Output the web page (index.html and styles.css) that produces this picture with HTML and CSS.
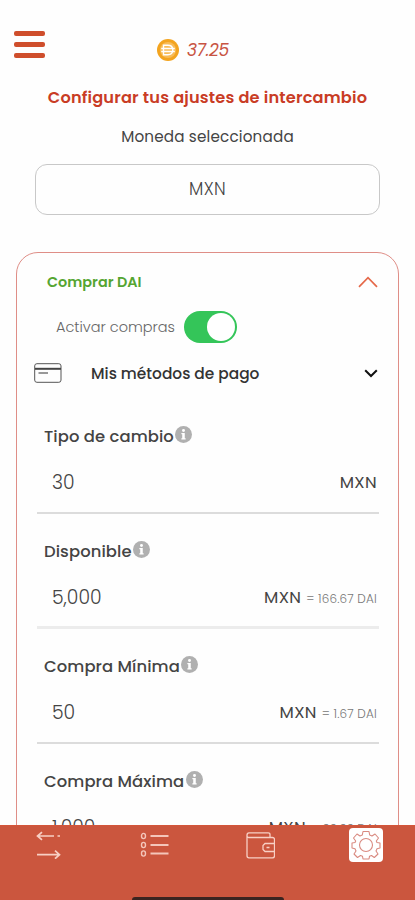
FILE: index.html
```html
<!DOCTYPE html>
<html lang="es">
<head>
<meta charset="utf-8">
<meta name="viewport" content="width=device-width, initial-scale=1">
<title>Ajustes de intercambio</title>
<link rel="stylesheet" href="styles.css">
</head>
<body>
<svg class="defs" width="0" height="0" aria-hidden="true">
  <symbol id="info" viewBox="0 0 16 16"><circle cx="8" cy="8" r="8" fill="#b0b0b0"/><circle cx="8" cy="4.2" r="1.4" fill="#fff"/><path d="M6 6.5h3.2v5H10v1.3H6v-1.3h.8V7.8H6z" fill="#fff"/></symbol>
</svg>
<main class="content">
  <header class="topbar">
    <button class="menu" aria-label="Menú"><i></i><i></i><i></i></button>
    <div class="balance">
      <svg width="22" height="22" viewBox="0 0 22 22" fill="none"><circle cx="11" cy="11" r="11" fill="#f3a41f"/><circle cx="11" cy="11" r="8" fill="#f8bc58"/><path d="M6.5 6.3h4.3c3 0 5 2 5 4.7s-2 4.7-5 4.7H6.5zM4.2 9.5h13.6M4.2 12.5h13.6" stroke="#fff" stroke-width="1.4"/></svg>
      <span>37.25</span>
    </div>
  </header>
  <h1>Configurar tus ajustes de intercambio</h1>
  <p class="caption">Moneda seleccionada</p>
  <div class="currency">MXN</div>
  <section class="panel">
    <div class="panel-head">
      <h2>Comprar DAI</h2>
      <svg width="20" height="12" viewBox="0 0 20 12" fill="none" stroke="#e5694a" stroke-width="1.7"><path d="M1 10.8 10 1.7l9 9.1"/></svg>
    </div>
    <div class="activate"><span>Activar compras</span><div class="switch"></div></div>
    <div class="methods">
      <svg width="28" height="20" viewBox="0 0 28 20" fill="none" stroke="#555"><rect x=".7" y=".7" width="26.3" height="18.6" rx="2.2"/><path d="M1 5.8h26" stroke="#444" stroke-width="2"/><path d="M4.5 10H14" stroke-width="1.2"/></svg>
      <span>Mis métodos de pago</span>
      <svg class="down" width="14" height="9" viewBox="0 0 14 9" fill="none" stroke="#111" stroke-width="2"><path d="m1.2 1.2 5.8 5.8 5.8-5.8"/></svg>
    </div>
    <div class="field">
      <div class="label"><span>Tipo de cambio</span><svg width="17" height="17"><use href="#info"/></svg></div>
      <div class="entry"><span class="amount">30</span><span class="unit">MXN</span></div>
    </div>
    <div class="field soft">
      <div class="label"><span>Disponible</span><svg width="17" height="17"><use href="#info"/></svg></div>
      <div class="entry"><span class="amount">5,000</span><span class="unit">MXN <small>= 166.67 DAI</small></span></div>
    </div>
    <div class="field">
      <div class="label"><span>Compra Mínima</span><svg width="17" height="17"><use href="#info"/></svg></div>
      <div class="entry"><span class="amount">50</span><span class="unit">MXN <small>= 1.67 DAI</small></span></div>
    </div>
    <div class="field">
      <div class="label"><span>Compra Máxima</span><svg width="17" height="17"><use href="#info"/></svg></div>
      <div class="entry"><span class="amount">1,000</span><span class="unit">MXN <small>= 33.33 DAI</small></span></div>
    </div>
  </section>
</main>
<nav class="tabs">
  <a><svg width="26" height="28" viewBox="0 0 26 28" fill="none" stroke="#f8cfc4" stroke-width="1.7"><path d="M2 5h17M22.5 5h2.5M7 1.2 2.5 5 7 8.8M2 23.7h22M20 19.7l4.5 4-4.5 4"/></svg></a>
  <a><svg width="30" height="26" viewBox="0 0 30 26" fill="none" stroke="#f4c6ba"><g stroke-width="1.4"><ellipse cx="4.5" cy="4" rx="2" ry="2.6"/><ellipse cx="4.5" cy="13" rx="2" ry="2.6"/><ellipse cx="4.5" cy="21.5" rx="2" ry="2.6"/></g><path d="M11.5 4h18M11.5 13h18M11.5 21.5h18" stroke-width="2"/></svg></a>
  <a><svg width="30" height="27" viewBox="0 0 30 27" fill="none" stroke="#f8d0c5" stroke-width="1.3"><path d="M25 5.5V2.6q0-1.8-1.8-1.8H4Q2 .8 2 3.2t2 2.3h23.5q2 0 2 2v4M2 3.2v20.6q0 2 2 2h23.5q2 0 2-2v-4"/><path d="M29.5 11.5H20l-2 2v4l2 2h9.500zM21.500 15.500h3"/></svg></a>
  <a class="active"><svg width="30" height="30" viewBox="-15 -15 30 30" fill="none" stroke="#d98a80" stroke-width="1.1" stroke-linejoin="round"><path d="M-3-13.5H3L3.7-10 6-9 9-11 12.5-7 10.3-4 11-2.5 14-2V3L11 3.7 10 6l2 3-3.7 3.5L5.5 10.5 3.5 11.3 3 14H-3L-3.5 11.3-5.5 10.5-8.5 12.5-12 9-10 6-11 3.7-14 3V-2L-11-2.5-10.3-4-12.5-7-9-11-6-9-3.7-10Z"/><circle r="6.5"/></svg></a>
  <div class="home"></div>
</nav>
</body>
</html>
```
FILE: styles.css
```css
* { box-sizing: border-box; }
body {
  margin: 0;
  height: 900px;
  overflow: hidden;
  display: flex;
  flex-direction: column;
  background: #fefefe;
  color: #444;
  font-family: Poppins, Inter, "Liberation Sans", sans-serif;
}
.defs { position: absolute; }
h1, h2, p { margin: 0; }
.content { flex: 1; min-height: 0; overflow: hidden; }
.topbar { height: 82px; display: flex; padding: 31px 0 0 14px; }
.menu { width: 31px; height: 27px; padding: 0; border: 0; background: none; display: flex; flex-direction: column; justify-content: space-between; }
.menu i { width: 31px; height: 5px; border-radius: 2px; background: #cf4e2c; }
.balance { display: flex; align-items: center; gap: 8px; height: 22px; margin: 8px 0 0 112px; color: #c85443; font-size: 17px; font-style: italic; letter-spacing: -.3px; }
.balance span { margin-top: -1px; }
h1 { height: 30px; line-height: 31px; text-align: center; color: #c93c25; font-size: 16.2px; font-weight: 600; letter-spacing: .17px; white-space: nowrap; }
.caption { height: 52px; line-height: 50px; text-align: center; font-size: 15.2px; letter-spacing: .17px; }
.currency { height: 51px; margin: 0 35px; border: 1.5px solid #c8c8c8; border-radius: 12px; line-height: 49px; text-align: center; font-size: 17px; letter-spacing: .3px; color: #444; font-weight: 300; }
.panel { margin: 37px 16px 0; height: 700px; border: 1.5px solid #df8e87; border-radius: 22px; padding: 0 19px 0 20px; }
.panel-head { display: flex; align-items: center; justify-content: space-between; height: 58px; padding: 0 1px 0 10px; }
h2 { color: #55a532; font-size: 14.4px; font-weight: 600; }
.activate { display: flex; align-items: center; gap: 9px; height: 32px; padding-left: 19px; font-size: 14.5px; color: #666; font-weight: 300; }
.activate span { width: 119px; white-space: nowrap; }
.switch { width: 53px; height: 32px; border-radius: 16px; background: #34c559; padding: 2px; display: flex; justify-content: flex-end; }
.switch::before { content: ""; width: 28px; height: 28px; border-radius: 50%; background: #fff; }
.methods { display: flex; align-items: center; height: 56px; padding-top: 4px; margin-left: -3px; font-size: 15.4px; font-weight: 500; color: #333; }
.methods svg { margin-top: -1px; }
.methods span { margin-left: 29px; }
.methods .down { margin: 0 1px 0 auto; }
.field { height: 115px; border-bottom: 2px solid #dcdcdc; padding-top: 24px; }
.field.soft { border-bottom: 3px solid #ececec; }
.label { display: flex; align-items: center; gap: 1.5px; height: 26px; padding-left: 7px; font-size: 16.4px; letter-spacing: .08px; font-weight: 500; }
.label svg { margin-top: -3px; }
.entry { display: flex; align-items: center; justify-content: space-between; height: 66px; padding: 0 2px 0 15px; }
.amount { font-size: 18.8px; font-weight: 300; color: #444; }
.unit { font-size: 16.6px; letter-spacing: .35px; color: #444; }
.unit small { font-size: 12px; letter-spacing: .2px; color: #777; font-weight: 300; }
.tabs { position: relative; height: 75px; flex: none; background: #cb563e; border-top: 1px solid #d4553a; display: grid; grid-template-columns: repeat(4, 106px); margin-left: -5px; }
.tabs a { display: flex; justify-content: center; align-items: center; height: 38px; }
.tabs .active svg { width: 34px; height: 34px; padding: 2px; border-radius: 4px; background: #fff; }
.home { position: absolute; left: 137px; bottom: 0; width: 152px; height: 3px; border-radius: 3px 3px 0 0; background: #3b2420; }
```
